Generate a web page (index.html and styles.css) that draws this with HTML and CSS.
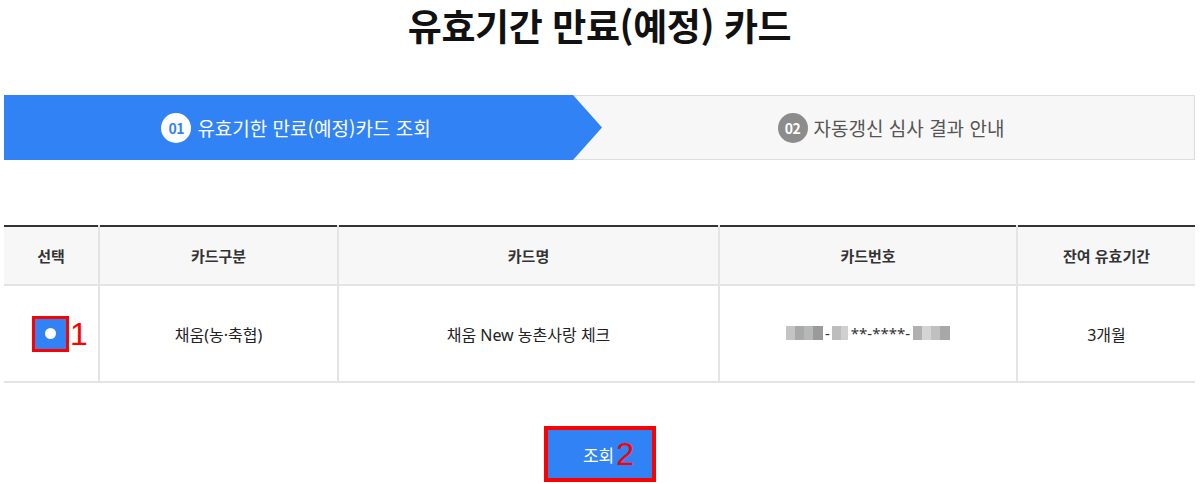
FILE: index.html
```html
<!DOCTYPE html>
<html lang="ko">
<head>
<meta charset="utf-8">
<title>유효기간 만료(예정) 카드</title>
<link rel="stylesheet" href="styles.css">
</head>
<body>
<div class="page">
  <h1 class="title">유효기간 만료(예정) 카드</h1>

  <div class="steps">
    <div class="step step-on">
      <span class="num">01</span><span class="label">유효기한 만료(예정)카드 조회</span>
    </div>
    <div class="step step-off">
      <span class="num">02</span><span class="label">자동갱신 심사 결과 안내</span>
    </div>
  </div>

  <table class="cards">
    <colgroup>
      <col class="c1"><col class="c2"><col class="c3"><col class="c4"><col class="c5">
    </colgroup>
    <thead>
      <tr>
        <th>선택</th>
        <th>카드구분</th>
        <th>카드명</th>
        <th>카드번호</th>
        <th>잔여 유효기간</th>
      </tr>
    </thead>
    <tbody>
      <tr>
        <td class="sel">
          <span class="mark"><span class="radio"><span class="dot"></span></span></span><span class="anno">1</span>
        </td>
        <td>채움(농·축협)</td>
        <td>채움 New 농촌사랑 체크</td>
        <td>
          <span class="cardno">
            <span class="px p1"></span><span class="px p2"></span><span class="px p3"></span><span class="px p4"></span><span class="dash">-</span><span class="px p5"></span><span class="px p6"></span><span class="stars">**-****-</span><span class="px p7"></span><span class="px p8"></span><span class="px p9"></span><span class="px p10"></span>
          </span>
        </td>
        <td>3개월</td>
      </tr>
    </tbody>
  </table>

  <div class="actions">
    <span class="btn-mark"><button class="btn" type="button">조회<span class="anno anno2">2</span></button></span>
  </div>
</div>
</body>
</html>
```
FILE: styles.css
```css
html, body {
  margin: 0;
  padding: 0;
  background: #fff;
}
body {
  font-family: "Noto Sans", "Noto Sans CJK KR", sans-serif;
  color: #222;
}
.page {
  margin: 0 5px 0 4px;
}
.title {
  margin: 0;
  padding-top: 3px;
  font-family: "Noto Sans CJK KR", sans-serif;
  font-size: 37px;
  line-height: 44px;
  font-weight: 700;
  text-align: center;
  color: #111;
  letter-spacing: -0.4px;
}
.steps {
  margin-top: 48px;
  height: 63px;
  border: 1px solid #dedede;
  background: #f7f7f7;
  display: flex;
}
.step {
  display: flex;
  align-items: center;
  justify-content: center;
  padding-right: 14px;
  box-sizing: border-box;
}
.step-on {
  width: 598px;
  margin: -1px 0 -1px -1px;
  background: #3183f5;
  clip-path: polygon(0 0, 569px 0, 100% 50%, 569px 100%, 0 100%);
  color: #fff;
}
.step-off {
  flex: 1;
  color: #555;
}
.num {
  width: 30px;
  height: 30px;
  border-radius: 50%;
  display: inline-flex;
  align-items: center;
  justify-content: center;
  font-family: "Noto Sans CJK KR", sans-serif;
  font-size: 14px;
  font-weight: 700;
  margin-right: 6px;
  letter-spacing: -0.5px;
}
.step-on .num {
  background: #fff;
  color: #3183f5;
}
.step-off .num {
  background: #8c8c8c;
  color: #fff;
}
.label {
  font-family: "Noto Sans CJK KR", sans-serif;
  font-size: 19px;
  letter-spacing: 0;
}
.cards {
  margin-top: 65px;
  width: 100%;
  border-collapse: collapse;
  table-layout: fixed;
  border-top: 2px solid #333;
}
.c1 { width: 95px; }
.c2 { width: 239px; }
.c3 { width: 381px; }
.c4 { width: 298px; }
.c5 { width: auto; }
.cards th, .cards td {
  border-left: 2px solid #e4e4e4;
  border-bottom: 2px solid #e4e4e4;
  text-align: center;
  padding: 0;
}
.cards th:first-child, .cards td:first-child {
  border-left: 0;
}
.cards th {
  height: 57px;
  background: #f7f7f7;
  font-family: "Noto Sans CJK KR", sans-serif;
  font-size: 15px;
  font-weight: 700;
  color: #333;
}
.cards td {
  height: 95px;
  font-size: 16px;
  color: #222;
}
.sel {
  white-space: nowrap;
}
.mark {
  display: inline-block;
  vertical-align: middle;
  border: 3px solid #f00;
  margin-left: 18px;
}
.radio {
  display: flex;
  width: 31px;
  height: 30px;
  background: #3183f5;
  align-items: center;
  justify-content: center;
}
.dot {
  width: 11px;
  height: 11px;
  border-radius: 50%;
  background: #fff;
}
.anno {
  display: inline-block;
  vertical-align: middle;
  font-family: "Liberation Sans", Arial, sans-serif;
  font-size: 32px;
  line-height: 32px;
  color: #f00;
  margin-left: 1px;
}
.cardno {
  display: inline-flex;
  align-items: center;
  color: #333;
  font-size: 15px;
}
.px {
  display: inline-block;
  width: 9px;
  height: 14px;
}
.p1 { background: #c4c4c4; }
.p2 { background: #a9a9a9; }
.p3 { background: #b6b8b8; }
.p4 { background: #9a9a9a; width: 10px; }
.p5 { background: #bdbdbd; }
.p6 { background: #d0d0d0; width: 7px; }
.p7 { background: #b0b0b0; }
.p8 { background: #d4d4d4; }
.p9 { background: #c0c0c0; }
.p10 { background: #a8a8a8; width: 10px; }
.dash {
  margin: 0 2px;
}
.stars {
  margin: 0 3px;
  letter-spacing: 0;
}
.actions {
  margin-top: 43px;
  display: flex;
  justify-content: center;
}
.btn-mark {
  display: inline-block;
  border: 4px solid #f00;
}
.btn {
  display: flex;
  align-items: center;
  justify-content: center;
  width: 104px;
  height: 48px;
  border: 0;
  padding: 0 0 0 18px;
  background: #3183f5;
  color: #fff;
  font-family: "Noto Sans CJK KR", sans-serif;
  font-size: 17px;
}
.anno2 {
  margin-left: 2px;
}
```
